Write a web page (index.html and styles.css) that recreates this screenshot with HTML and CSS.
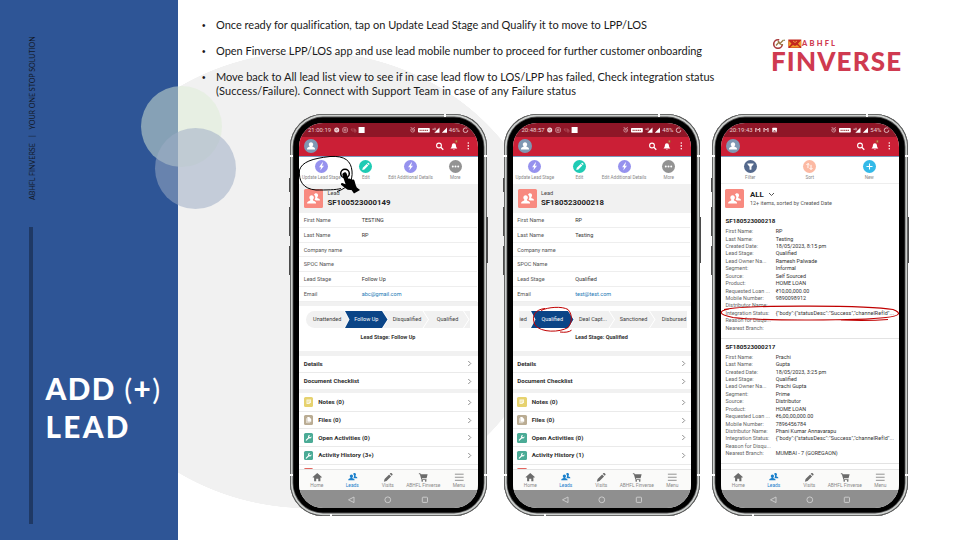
FILE: index.html
```html
<!DOCTYPE html>
<html lang="en">
<head>
<meta charset="utf-8">
<title>ABHFL Finverse - Add Lead</title>
<link rel="stylesheet" href="styles.css">
</head>
<body>
<svg class="defs" width="0" height="0">
  <symbol id="bolt" viewBox="0 0 12 12"><path d="M6.8 2.4 3.8 6.6h1.8L4.9 9.6l3.4-4.3H6.4l1-2.9z" fill="#fff"/></symbol>
  <symbol id="pen" viewBox="0 0 12 12"><path d="M3 9.2l.5-2 3.6-3.6 1.5 1.5L5 8.700zM7.500 3.200l.6-.6q.3-.3.6 0l.9.9q.3.3 0 .6l-.6.6z" fill="#fff"/></symbol>
  <symbol id="dots" viewBox="0 0 12 12"><g fill="#fff"><circle cx="3.500" cy="6" r=".9"/><circle cx="6" cy="6" r=".9"/><circle cx="8.500" cy="6" r=".9"/></g></symbol>
  <symbol id="funnel" viewBox="0 0 12 12"><path d="M3.200 3.300h5.600q.3.3 0 .7L6.900 6.200v2.600q-.9.5-1.800 0V6.200L3.200 4q-.3-.4 0-.7z" fill="#fff"/></symbol>
  <symbol id="sort" viewBox="0 0 12 12"><path d="M4.600 7.500V3.200M3.200 4.600l1.400-1.400L6 4.600M7.400 4.500v4.300M6 7.400l1.400 1.400 1.400-1.400" fill="none" stroke="#fff" stroke-width=".9"/></symbol>
  <symbol id="plus" viewBox="0 0 12 12"><path d="M6 3.200v5.600M3.200 6h5.600" stroke="#fff" stroke-width="1"/></symbol>
  <symbol id="user" viewBox="0 0 14 14"><path d="M7 3.200a2.200 2.200 0 0 1 1.300 4q.1.600 1 .9 1.700.6 1.700 1.700v.6H3v-.6q0-1.100 1.700-1.700.9-.3 1-.9A2.200 2.200 0 0 1 7 3.200z" fill="#fff"/></symbol>
  <symbol id="people" viewBox="0 0 20 20"><path d="M8 6.500c1.400 0 2.400 1.100 2.400 2.500 0 .9-.4 1.600-1 2.100-.2.900.2 1.100 1.300 1.600 1.500.6 2 1.200 2 2.500H3.300c0-1.300.5-1.900 2-2.500 1.100-.5 1.500-.7 1.300-1.600-.6-.5-1-1.200-1-2.100 0-1.400 1-2.500 2.400-2.500zM12.700 4.500c1.200 0 2.100 1 2.100 2.200 0 .8-.3 1.400-.8 1.900-.2.700 0 1 1.100 1.400 1.300.5 1.700 1 1.700 2.200h-4.200c-.5-.5-1-.7-1.500-.9.900-1.200 1.200-2.900.2-4.400-.2-.3-.5-.6-.8-.8.300-.9 1.100-1.600 2.200-1.600z" fill="currentColor"/></symbol>
  <symbol id="home" viewBox="0 0 12 12"><path d="M6 1 .8 5.800q-.3.5.3.500h1.300v4.400h2.400V7.600h2.400v3.100h2.400V6.300h1.300q.6 0 .3-.5z" fill="#6b6b6b"/></symbol>
  <symbol id="pencil" viewBox="0 0 12 12"><path d="M1 11l.8-3L7 2.800 9.200 5 4 10.200zM7.700 2.100l.9-.9q.5-.4 1 0L10.800 2.400q.4.500 0 1l-.9.9z" fill="#6b6b6b"/></symbol>
  <symbol id="cart" viewBox="0 0 12 12"><path d="M1 1.500h1.700l.4 1.200H11L9.800 7H4.500l.2.900h5v.9H3.900L2.100 2.500H1z" fill="#6b6b6b"/><circle cx="4.800" cy="10" r="1" fill="#6b6b6b"/><circle cx="8.800" cy="10" r="1" fill="#6b6b6b"/></symbol>
  <symbol id="menu" viewBox="0 0 12 12"><path d="M1 2.500h10M1 6h10M1 9.500h10" stroke="#777" stroke-width=".9"/></symbol>
  <symbol id="chev" viewBox="0 0 6 8"><path d="M1.500 1 4.500 4 1.500 7" fill="none" stroke="#777" stroke-width="1"/></symbol>
  <symbol id="note" viewBox="0 0 10 10"><path d="M2.600 2.600h4.800v3L5.700 7.400H2.600z" fill="#fff" opacity=".8"/><path d="M3.500 4.300h3M3.500 5.600h1.600" stroke="#e6d26f" stroke-width=".6"/></symbol>
  <symbol id="file" viewBox="0 0 10 10"><path d="M3.500 2.200h2L7.600 4.300v2.900H3.500z" fill="#fff"/><path d="M2.600 3.400v4.700h4" stroke="#fff" stroke-width=".6" fill="none"/></symbol>
  <symbol id="wrench" viewBox="0 0 10 10"><path d="M2.400 7.600 5 5" stroke="#fff" stroke-width="1.200" stroke-linecap="round"/><path d="M7.900 3.400 6.800 4.500 5.600 4.300 5.500 3.200 6.500 2.100Q4.900 1.700 4.300 3.100 4 4.200 4.700 5.300 6 6.100 7 5.600 8.200 4.900 7.900 3.400z" fill="#fff"/></symbol>
  <symbol id="tools" viewBox="0 0 42 14"><g fill="none" stroke="#fff"><circle cx="10" cy="6.500" r="2.400" stroke-width="1.100"/><path d="M11.800 8.300 14.300 10.800" stroke-width="1.300"/></g><path d="M21.500 9.500q1.400-.8 1.400-3.200 0-2.100 2-2.100t2 2.100q0 2.400 1.400 3.200zM24 10h1.800q-.9 1.200-1.800 0z" fill="#fff"/><circle cx="27.300" cy="2.500" r="1.800" fill="#b0472f"/><path d="M27.300 1.500v1.800" stroke="#f3d0a0" stroke-width=".6"/><g fill="#fff"><circle cx="39.300" cy="4" r=".8"/><circle cx="39.300" cy="6.900" r=".8"/><circle cx="39.300" cy="9.700" r=".8"/></g></symbol>
  <symbol id="signals" viewBox="0 0 59 10"><g fill="none" stroke="#e4b9bf" stroke-width=".7"><circle cx="2.700" cy="5.200" r="1.900"/><path d="M2.700 4v1.300h1M.6 3l1-1M4.800 3l-1-1"/></g><rect x="8" y="3" width="11.800" height="4.600" rx=".8" fill="#fff"/><path d="M9.500 5.300h8.700" stroke="#a55" stroke-width="1.300" stroke-dasharray="1.300 .5"/><path d="M24.300 7.800 29.500 2.600v5.200zM31.800 7.800 37 2.600v5.200z" fill="#fff"/><path d="M25 2.800v2.500M22.500 4.200h1.400" stroke="#fff" stroke-width=".8"/><circle cx="55.500" cy="5.200" r="2.300" fill="none" stroke="#e6c5c9" stroke-width=".9" stroke-dasharray="11.500 3"/></symbol>
  <symbol id="apps" viewBox="0 0 31 10"><circle cx="2.700" cy="5" r="2.500" fill="#f3dfe1"/><path d="M1.300 4.300q1.500-.5 2.800.4M1.500 5.800q1.200-.4 2.200.2" stroke="#8c1726" stroke-width=".5" fill="none"/><g fill="none" stroke="#e0b2b8" stroke-width=".7"><rect x="8.800" y="2.700" width="4.600" height="4.600" rx="1.200"/><circle cx="11.100" cy="5" r="1"/></g><path d="M17 4h4v2h-3zM20 5h2v2h-2" stroke="#b85a65" stroke-width=".6" fill="none"/><rect x="24.600" y="2" width="6" height="6" fill="#fff"/></symbol>
  <symbol id="apps3" viewBox="0 0 31 10"><path d="M.8 7V3.200l2 2 2-2V7M9 7V3.200l2 2 2-2V7" fill="none" stroke="#f0d5d8" stroke-width="1"/><rect x="17.300" y="2.700" width="4.600" height="4.600" rx=".5" fill="#fff"/><path d="M18 6.600l1.300-1.500 1 .9.500-.5.800 1.100z" fill="#8c1726"/></symbol>
</svg>

<aside class="side">
  <div class="rail"><p class="tagline">ABHFL FINVERSE<span class="pipe">|</span>YOUR ONE STOP SOLUTION</p><div class="bar"></div></div>
  <h1 class="title">ADD <span class="paren">(</span>+<span class="paren">)</span><br><span class="second-line">LEAD</span></h1>
</aside>
<div class="backdrop"></div>
<div class="bubble green"></div>
<div class="bubble blue"></div>

<main class="main">
  <header class="top">
    <ul class="notes">
      <li>Once ready for qualification, tap on Update Lead Stage and Qualify it to move to LPP/LOS</li>
      <li class="tight">Open Finverse LPP/LOS app and use lead mobile number to proceed for further customer onboarding</li>
      <li>Move back to All lead list view to see if in case lead flow to LOS/LPP has failed, Check integration status<br><span class="loose">(Success/Failure). Connect with Support Team in case of any Failure status</span></li>
    </ul>
    <div class="logo">
      <div class="logo-top">
        <svg width="30" height="11" viewBox="0 0 30 11"><circle cx="6" cy="6" r="4.300" fill="none" stroke="#a83a3c" stroke-width="1.600" stroke-dasharray="21 6"/><path d="M4 7.500 7 4l1 1.500L11.500 2M6 3l2 3 3 1" fill="none" stroke="#9a7a45" stroke-width="1.300"/><circle cx="12.300" cy="2.200" r=".8" fill="#8a8a52"/><rect x="16.300" y="1.500" width="13" height="8.500" fill="#c3281e"/><path d="M16.500 2.500 19.500 5.500 18 7.500 16.500 8.500zM29 2.500 26 5.500l1.500 2 1.500 1zM18 9.500l3-2.500 2 1 2-1 3 2.500z" fill="#f0a02c"/><path d="M21 3l2 1.500L25 3" stroke="#f0b04c" stroke-width=".8" fill="none"/></svg><span>ABHFL</span>
      </div>
      <div class="logo-name">FINVERSE</div>
    </div>
  </header>

  <section class="phones">
    <article class="phone p1">
      <i class="ant l1"></i><i class="ant l2"></i><i class="ant r1"></i><i class="ant r2"></i><i class="ant up"></i><i class="ant down"></i><i class="btn k1"></i><i class="btn k2"></i><i class="btn k3"></i><i class="btn k4"></i>
      <div class="screen">
        <div class="status"><span class="clock">21:00:19</span><svg class="apps"><use href="#apps"/></svg><div class="sig"><svg width="59" height="10"><use href="#signals"/></svg><b>46%</b></div></div>
        <div class="appbar"><svg class="avatar"><use href="#user"/></svg><svg width="42" height="14"><use href="#tools"/></svg></div>
        <div class="actions"><div><svg class="ic violet"><use href="#bolt"/></svg>Update Lead Stage</div><div><svg class="ic teal"><use href="#pen"/></svg>Edit</div><div><svg class="ic violet"><use href="#bolt"/></svg>Edit Additional Details</div><div><svg class="ic grey"><use href="#dots"/></svg>More</div></div>
        <div class="lead"><svg class="badge"><use href="#people"/></svg><div><small>Lead</small><strong>SF100523000149</strong></div></div>
        <dl class="fields"><div><dt>First Name</dt><dd>TESTING</dd></div><div><dt>Last Name</dt><dd>RP</dd></div><div><dt>Company name</dt><dd></dd></div><div><dt>SPOC Name</dt><dd></dd></div><div><dt>Lead Stage</dt><dd>Follow Up</dd></div><div><dt>Email</dt><dd class="mail">abc@gmail.com</dd></div></dl>
        <div class="path"><div class="steps early"><span>Unattended</span><span class="on">Follow Up</span><span>Disqualified</span><span>Qualified</span><span></span></div><p>Lead Stage: Follow Up</p></div>
        <div class="links"><div>Details<svg><use href="#chev"/></svg></div><div>Document Checklist<svg><use href="#chev"/></svg></div></div>
        <div class="related"><div><svg class="sq yellow"><use href="#note"/></svg><b>Notes (0)</b><svg class="cv"><use href="#chev"/></svg></div><div><svg class="sq tan"><use href="#file"/></svg><b>Files (0)</b><svg class="cv"><use href="#chev"/></svg></div><div><svg class="sq green2"><use href="#wrench"/></svg><b>Open Activities (0)</b><svg class="cv"><use href="#chev"/></svg></div><div><svg class="sq green2"><use href="#wrench"/></svg><b>Activity History (3+)</b><svg class="cv"><use href="#chev"/></svg></div><div class="peek"><svg class="sq red"></svg></div></div>
        <nav class="tabs"><div><svg><use href="#home"/></svg>Home</div><div class="cur"><svg><use href="#people"/></svg>Leads</div><div><svg><use href="#pencil"/></svg>Visits</div><div><svg><use href="#cart"/></svg>ABHFL Finverse</div><div><svg><use href="#menu"/></svg>Menu</div></nav>
        <div class="keys"><svg width="178" height="19" viewBox="0 0 178 19" fill="none" stroke="#d0d0d0" stroke-width=".9"><path d="M55 7v5.600L49.500 9.800z"/><circle cx="88.800" cy="9.800" r="2.900"/><rect x="123.300" y="7.200" width="5.200" height="5.200" rx=".6"/></svg></div>
      </div>
    </article>

    <article class="phone p2">
      <i class="ant l1"></i><i class="ant l2"></i><i class="ant r1"></i><i class="ant r2"></i><i class="ant up"></i><i class="ant down"></i><i class="btn k1"></i><i class="btn k2"></i><i class="btn k3"></i><i class="btn k4"></i>
      <div class="screen">
        <div class="status"><span class="clock">20:48:57</span><svg class="apps"><use href="#apps"/></svg><div class="sig"><svg width="59" height="10"><use href="#signals"/></svg><b>48%</b></div></div>
        <div class="appbar"><svg class="avatar"><use href="#user"/></svg><svg width="42" height="14"><use href="#tools"/></svg></div>
        <div class="actions"><div><svg class="ic violet"><use href="#bolt"/></svg>Update Lead Stage</div><div><svg class="ic teal"><use href="#pen"/></svg>Edit</div><div><svg class="ic violet"><use href="#bolt"/></svg>Edit Additional Details</div><div><svg class="ic grey"><use href="#dots"/></svg>More</div></div>
        <div class="lead"><svg class="badge"><use href="#people"/></svg><div><small>Lead</small><strong>SF180523000218</strong></div></div>
        <dl class="fields"><div><dt>First Name</dt><dd>RP</dd></div><div><dt>Last Name</dt><dd>Testing</dd></div><div><dt>Company name</dt><dd></dd></div><div><dt>SPOC Name</dt><dd></dd></div><div><dt>Lead Stage</dt><dd>Qualified</dd></div><div><dt>Email</dt><dd class="mail">test@test.com</dd></div></dl>
        <div class="path"><div class="steps later"><span>ied</span><span class="on">Qualified</span><span>Deal Capt...</span><span>Sanctioned</span><span>Disbursed</span></div><p>Lead Stage: Qualified</p></div>
        <div class="links"><div>Details<svg><use href="#chev"/></svg></div><div>Document Checklist<svg><use href="#chev"/></svg></div></div>
        <div class="related"><div><svg class="sq yellow"><use href="#note"/></svg><b>Notes (0)</b><svg class="cv"><use href="#chev"/></svg></div><div><svg class="sq tan"><use href="#file"/></svg><b>Files (0)</b><svg class="cv"><use href="#chev"/></svg></div><div><svg class="sq green2"><use href="#wrench"/></svg><b>Open Activities (0)</b><svg class="cv"><use href="#chev"/></svg></div><div><svg class="sq green2"><use href="#wrench"/></svg><b>Activity History (1)</b><svg class="cv"><use href="#chev"/></svg></div><div class="peek"><svg class="sq red"></svg></div></div>
        <nav class="tabs"><div><svg><use href="#home"/></svg>Home</div><div class="cur"><svg><use href="#people"/></svg>Leads</div><div><svg><use href="#pencil"/></svg>Visits</div><div><svg><use href="#cart"/></svg>ABHFL Finverse</div><div><svg><use href="#menu"/></svg>Menu</div></nav>
        <div class="keys"><svg width="178" height="19" viewBox="0 0 178 19" fill="none" stroke="#d0d0d0" stroke-width=".9"><path d="M55 7v5.600L49.500 9.800z"/><circle cx="88.800" cy="9.800" r="2.900"/><rect x="123.300" y="7.200" width="5.200" height="5.200" rx=".6"/></svg></div>
      </div>
    </article>

    <article class="phone p3">
      <i class="ant l1"></i><i class="ant l2"></i><i class="ant r1"></i><i class="ant r2"></i><i class="ant up"></i><i class="ant down"></i><i class="btn k1"></i><i class="btn k2"></i><i class="btn k3"></i><i class="btn k4"></i>
      <div class="screen">
        <div class="status"><span class="clock">20:19:43</span><svg class="apps"><use href="#apps3"/></svg><div class="sig"><svg width="59" height="10"><use href="#signals"/></svg><b>54%</b></div></div>
        <div class="appbar"><svg class="avatar"><use href="#user"/></svg><svg width="42" height="14"><use href="#tools"/></svg></div>
        <div class="actions three"><div><svg class="ic navy"><use href="#funnel"/></svg>Filter</div><div><svg class="ic peach"><use href="#sort"/></svg>Sort</div><div><svg class="ic sky"><use href="#plus"/></svg>New</div></div>
        <div class="lead all"><svg class="badge"><use href="#people"/></svg><div><strong>ALL <svg width="7" height="5" viewBox="0 0 7 5"><path d="M1 1l2.500 2.500L6 1" fill="none" stroke="#444" stroke-width=".9"/></svg></strong><small>12+ items, sorted by Created Date</small></div></div>
        <div class="record"><h3>SF180523000218</h3>
          <dl><dt>First Name:</dt><dd>RP</dd><dt>Last Name:</dt><dd>Testing</dd><dt>Created Date:</dt><dd>18/05/2023, 8:15 pm</dd><dt>Lead Stage:</dt><dd>Qualified</dd><dt>Lead Owner Na...</dt><dd>Ramesh Palwade</dd><dt>Segment:</dt><dd>Informal</dd><dt>Source:</dt><dd>Self Sourced</dd><dt>Product:</dt><dd>HOME LOAN</dd><dt>Requested Loan ...</dt><dd>₹10,00,000.00</dd><dt>Mobile Number:</dt><dd>9890098912</dd><dt>Distributor Name:</dt><dd></dd><dt>Integration Status:</dt><dd class="json">{"body":{"statusDesc":"Success","channelRefId"...</dd><dt>Reason for Disqu...</dt><dd></dd><dt>Nearest Branch:</dt><dd></dd></dl></div>
        <div class="record second"><h3>SF180523000217</h3>
          <dl><dt>First Name:</dt><dd>Prachi</dd><dt>Last Name:</dt><dd>Gupta</dd><dt>Created Date:</dt><dd>18/05/2023, 3:25 pm</dd><dt>Lead Stage:</dt><dd>Qualified</dd><dt>Lead Owner Na...</dt><dd>Prachi Gupta</dd><dt>Segment:</dt><dd>Prime</dd><dt>Source:</dt><dd>Distributor</dd><dt>Product:</dt><dd>HOME LOAN</dd><dt>Requested Loan ...</dt><dd>₹6,00,00,000.00</dd><dt>Mobile Number:</dt><dd>7896456784</dd><dt>Distributor Name:</dt><dd>Phani Kumar Annavarapu</dd><dt>Integration Status:</dt><dd class="json">{"body":{"statusDesc":"Success","channelRefId"...</dd><dt>Reason for Disqu...</dt><dd></dd><dt>Nearest Branch:</dt><dd>MUMBAI - 7 (GOREGAON)</dd></dl></div>
        <nav class="tabs"><div><svg><use href="#home"/></svg>Home</div><div class="cur"><svg><use href="#people"/></svg>Leads</div><div><svg><use href="#pencil"/></svg>Visits</div><div><svg><use href="#cart"/></svg>ABHFL Finverse</div><div><svg><use href="#menu"/></svg>Menu</div></nav>
        <div class="keys"><svg width="178" height="19" viewBox="0 0 178 19" fill="none" stroke="#d0d0d0" stroke-width=".9"><path d="M55 7v5.600L49.500 9.800z"/><circle cx="88.800" cy="9.800" r="2.900"/><rect x="123.300" y="7.200" width="5.200" height="5.200" rx=".6"/></svg></div>
      </div>
    </article>
  </section>
</main>

<svg class="ink" viewBox="0 0 960 540">
  <path d="M337 191.500C348 188 353 181 352 171C351 161 345 155.500 330 156.500C312 158.500 302 162 299.500 170C298.500 181 303 189 316 190C326 190 336 190 341 188.500" fill="none" stroke="#000" stroke-width="1"/>
  <circle cx="345" cy="173.500" r="4.300" fill="none" stroke="#000" stroke-width="1.500"/>
  <path d="M344 172.500q1.800-1 2.600 1l2 5.500q.9-1 2 .2q1.100-.8 2 .5q1.300-.5 1.900 1l1 3.500q.3 1.300 1.300 3.300l3.200 2.500-6 3.500-2.500-3.500q-3.500.5-6-1.800l-4.500-3.500q-.6-1.600 1.200-1.800l3.400 1.300-3.300-9.500q-.1-1.500 1.700-2.200z" fill="#000"/>
  <path d="M541 310.500C548 307 562 306 568 309.500C573 315 572 323 568 327.500C560 332.500 541 333 535 325C531 316 535 309.500 545 308.500M560 332q8 1 11.500-1.800" fill="none" stroke="#c00000" stroke-width="1"/>
  <path d="M724 309.500C750 304.500 870 305.500 893 309.500C902 313 900 316 886 317.500C860 320.500 760 321 733 317.500C717 314.500 719 310.500 729 309M841 320q27 1 47-.5" fill="none" stroke="#c00000" stroke-width="1.100"/>
</svg>
</body>
</html>
```
FILE: styles.css
```css
* { box-sizing: border-box; margin: 0; padding: 0; }
body { width: 960px; height: 540px; display: flex; position: relative; overflow: hidden; background: #fff; font-family: Roboto, "Liberation Sans", sans-serif; }
.defs { position: absolute; }
.side { width: 178px; height: 540px; background: #2e5596; display: flex; }
.rail { width: 45.500px; padding: 34px 0 0 23px; display: flex; flex-direction: column; }
.tagline { writing-mode: vertical-rl; transform: rotate(180deg); height: 166px; width: 20px; font: 7.100px/20px Lato, sans-serif; white-space: nowrap; color: #131a28; }
.pipe { margin-inline: 6px; }
.bar { width: 4px; height: 297px; margin: 27px 0 0 6px; background: #1f3965; }
.title { padding-top: 370px; color: #fff; font: 900 29.700px/38px Lato, sans-serif; letter-spacing: 1.400px; white-space: nowrap; }
.second-line { letter-spacing: 2.300px; }
.paren { font-weight: 400; }
.backdrop { position: absolute; left: 178px; top: 0; width: 782px; height: 540px; background: radial-gradient(ellipse 244px 228.500px at 131px 280px, #f1f1f1 99.800%, transparent 100%); }
.bubble { position: absolute; width: 81px; height: 81px; border-radius: 50%; }
.green { left: 141px; top: 86px; background: rgba(221, 237, 213, .5); }
.blue { left: 155px; top: 128px; background: rgba(157, 172, 196, .53); }
.main { position: relative; width: 782px; height: 540px; }
.top { height: 114px; display: flex; }
.notes { width: 594px; padding: 18px 0 0 38px; list-style: none; font: 11px/14px Lato, sans-serif; color: #1a1a1a; white-space: nowrap; }
.notes li { margin-bottom: 12px; letter-spacing: -.01px; }
.notes .tight { letter-spacing: -.025px; }
.notes .loose { letter-spacing: .085px; }
.notes li::before { content: "•"; display: inline-block; width: 14px; margin-left: -14px; font: 10px/10px "Liberation Sans", sans-serif; }
.logo { padding-top: 38px; color: #cf3a50; font-family: Lato, sans-serif; font-weight: 900; }
.logo-top { display: flex; height: 12px; }
.logo-top span { font-size: 7.500px; line-height: 11px; letter-spacing: 2.200px; }
.logo-name { font-size: 26px; line-height: 23px; letter-spacing: 1.150px; margin-left: -1px; }

.phones { display: flex; padding-left: 112px; }
.phone { position: relative; width: 196.500px; height: 402px; flex: none; border-radius: 33px; background: #000; padding: 8.500px 9px; box-shadow: inset 0 0 0 .8px #4a4a4a, inset 0 0 0 2.600px #cdd0ce, inset 0 0 0 3.400px #4e4e4e; }
.p2 { margin-left: 17px; }
.p3 { margin-left: 11.500px; }
.ant { position: absolute; background: #fff; width: 3.500px; height: 2px; }
.l1, .l2 { left: -.5px; } .r1, .r2 { right: -.5px; }
.l1, .r1 { top: 41px; } .l2, .r2 { top: 359.500px; }
.up, .down { width: 2px; height: 3px; }
.up { left: 154px; top: -.5px; } .down { left: 40px; bottom: -.5px; }
.btn { position: absolute; width: 1.200px; background: #4b4b4b; left: -1px; }
.k1 { top: 64px; height: 14px; } .k2 { top: 93px; height: 29px; } .k3 { top: 132px; height: 29px; }
.k4 { left: auto; right: -1px; top: 103px; height: 46px; }
.screen { height: 385.500px; border-radius: 24px; overflow: hidden; background: #fff; display: flex; flex-direction: column; color: #3c3c3c; font-size: 5.500px; }
.screen > * { flex: none; }
.status { height: 14px; background: #8f1627; display: flex; align-items: center; padding: 0 9px; color: #e9ccd0; }
.clock { width: 25.500px; font-size: 6px; }
.apps { width: 31px; height: 10px; }
.sig { position: relative; margin-left: auto; height: 10px; }
.sig b { position: absolute; left: 39.300px; top: 1.500px; font-size: 6px; line-height: 8px; font-weight: 400; }
.appbar { height: 20.500px; background: #cb1f36; border-bottom: 1px solid #7d9cc0; display: flex; justify-content: space-between; align-items: center; padding: 0 6.700px 0 5px; }
.avatar { width: 14px; height: 14px; border-radius: 50%; background: #7f98b3; }
.actions { height: 27px; display: flex; text-align: center; white-space: nowrap; font-size: 4.600px; line-height: 8px; color: #888; padding-top: 3px; }
.actions > div { flex: 1 1 0; width: 0; display: flex; flex-direction: column; align-items: center; }
.ic { width: 13px; height: 13px; border-radius: 50%; margin-bottom: 1px; flex: none; }
.violet { background: #9692ee; } .teal { background: #1fcbb4; } .grey { background: #939393; }
.navy { background: #54698d; } .peach { background: #fcb9a3; } .sky { background: #33b9e8; }
.lead { height: 29px; background: #f1f1f1; display: flex; padding: 5px; gap: 4.500px; }
.badge { width: 19px; height: 19px; background: #f88a80; color: #fff; border-radius: 1.500px; }
.lead small { display: block; font-size: 5.600px; line-height: 8px; color: #444; }
.lead strong { display: block; font-size: 7.820px; line-height: 11px; color: #222; }
.fields { padding: 0 1px 0 0; }
.fields > div { height: 14.750px; line-height: 14px; border-bottom: .7px solid #eee; padding-left: 4.700px; display: flex; color: #555; }
.fields dt { width: 58px; }
.fields dd { color: #333; } .fields .mail { color: #1b78b5; }
.path { height: 54px; border-top: 4.500px solid #f1f1f1; border-bottom: 5.500px solid #f1f1f1; padding: 5.500px 4px 0 6.500px; }
.steps { height: 17px; display: flex; overflow: hidden; border-radius: 8.500px 0 0 8.500px; line-height: 17px; text-align: center; }
.steps span { flex: none; width: 45px; margin-right: -4.500px; background: #f1f1f1; clip-path: polygon(0 0, 39.500px 0, 45px 50%, 39.500px 100%, 0 100%, 5.500px 50%); padding-left: 3px; }
.steps span:first-child { clip-path: polygon(0 0, calc(100% - 5px) 0, 100% 50%, calc(100% - 5px) 100%, 0 100%); padding-left: 0; }
.steps .on { background: #0b4587; color: #fff; width: 42.500px; margin-right: -4.500px; clip-path: polygon(0 0, 37px 0, 42.500px 50%, 37px 100%, 0 100%, 4.500px 50%); padding: 0; }
.early { margin-right: 4px; }
.early span:first-child { width: 43.500px; margin-right: -4px; }
.later { border-radius: 0; }
.later span:first-child { width: 16px; margin-right: -4px; text-align: left; padding-left: .5px; }
.path p { text-align: center; font-weight: 700; font-size: 5.500px; line-height: 18px; color: #333; padding-right: 3px; }
.links { font-weight: 700; color: #2e2e2e; border-bottom: 4.700px solid #f1f1f1; }
.links div { display: flex; justify-content: space-between; align-items: center; padding: 0 5.500px 0 4.700px; height: 16.900px; font-size: 6.150px; }
.links div + div, .related div + div { border-top: .7px solid #eaeaea; }
.links svg, .cv { width: 5px; height: 7px; }
.related { height: 76px; overflow: hidden; color: #2e2e2e; font-size: 6.200px; }
.related div { height: 17.600px; display: flex; align-items: center; padding: 0 5.500px 0 4.700px; }
.related .peek { align-items: flex-start; padding-top: 3.500px; }
.related b { margin-left: 5px; }
.cv { margin-left: auto; }
.sq { width: 9.500px; height: 9.500px; border-radius: 1.500px; flex: none; }
.yellow { background: #e6d26f; } .tan { background: #baac93; } .green2 { background: #4bab96; } .red { background: #e4665f; }
.tabs { height: 21px; background: #fafaf9; border-top: .7px solid #e5e5e5; display: flex; font-size: 4.850px; line-height: 6px; color: #888; text-align: center; white-space: nowrap; padding-right: 1px; }
.tabs div { flex: 1 1 0; width: 0; display: flex; flex-direction: column; align-items: center; padding-top: 1.500px; }
.tabs svg { width: 10.500px; height: 10.500px; margin-bottom: 1px; }
.tabs .cur { color: #1b80cc; }
.tabs .cur svg { width: 13.500px; height: 13.500px; margin: -1.500px 0 -.5px; }
.keys { height: 20px; background: #8f8f8f; }
.actions.three { border-bottom: .7px solid #eee; }
.all { background: #fff; padding-left: 4.500px; gap: 6px; height: 31px; }
.all strong { font-size: 7.800px; line-height: 11px; } .all strong svg { margin-left: 2px; }
.all small { font-size: 5.450px; line-height: 7px; color: #555; white-space: nowrap; }
.record { height: 123.500px; padding-left: 5px; border-bottom: .7px solid #e3e3e3; white-space: nowrap; }
.record.second { height: 125.500px; padding-top: 2px; }
.record h3 { font-size: 6.200px; line-height: 13.200px; color: #222; }
.record dl { display: grid; grid-template-columns: 50.200px auto; grid-auto-rows: 7.430px; line-height: 7.430px; font-size: 5.400px; }
.record dt { color: #666; } .record dd { color: #333; }
.record .json { letter-spacing: .07px; }
.p3 .tabs { margin-top: 5px; }
.ink { position: absolute; left: 0; top: 0; width: 960px; height: 540px; pointer-events: none; }
```
